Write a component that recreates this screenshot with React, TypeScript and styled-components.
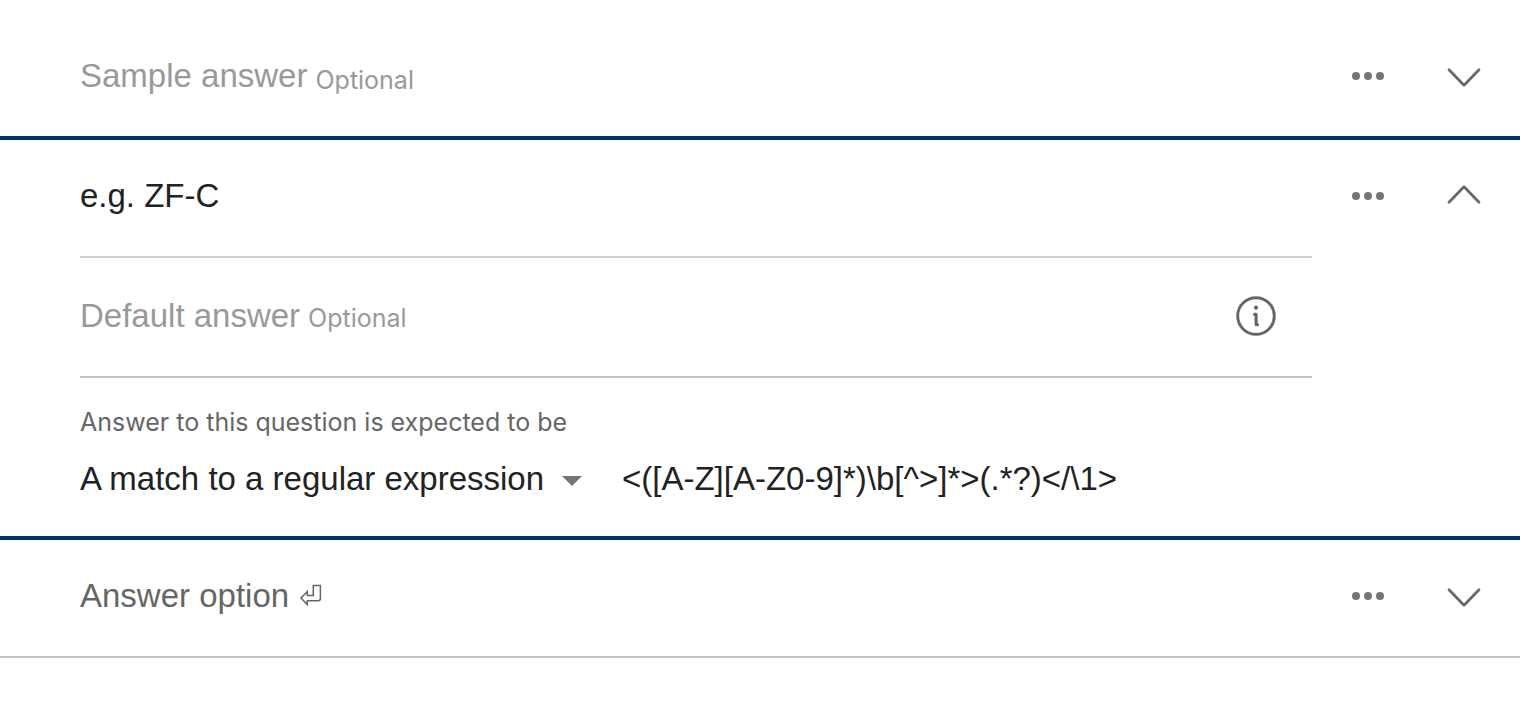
import React, { useState } from "react";
import styled, { createGlobalStyle } from "styled-components";

const color = {
  ink: "#222222",
  label: "#666666",
  hint: "#999999",
  dots: "#757575",
  navy: "#003468",
  line: "#c4c4c0",
  softLine: "#d0d0d0",
};

const GlobalStyle = createGlobalStyle`
  *, *::before, *::after { box-sizing: border-box; }
  body {
    margin: 0;
    background: #ffffff;
    color: ${color.ink};
    font-family: "Liberation Sans", Arial, sans-serif;
    font-size: 33px;
    line-height: 40px;
  }
  button, input, select { font: inherit; color: inherit; }
`;

const Form = styled.form`
  padding-top: 20px;
`;

const Section = styled.section<{ $rule: "strong" | "light" }>`
  display: flex;
  align-items: flex-start;
  gap: 32px;
  padding: 0 32px 0 80px;
  border-bottom: ${(p) =>
    p.$rule === "strong" ? `4px solid ${color.navy}` : `2px solid ${color.line}`};
`;

const Fields = styled.div`
  flex: 1;
  min-width: 0;
`;

const FieldRow = styled.div`
  display: flex;
  align-items: center;
  gap: 10px;
  min-height: 116px;
  padding-bottom: 4px;
`;

const AnswerRow = styled(FieldRow)`
  min-height: 118px;
  border-bottom: 2px solid ${color.softLine};
`;

const DefaultRow = styled(FieldRow)`
  min-height: 120px;
  padding: 0 36px 2px 0;
  border-bottom: 2px solid ${color.line};
`;

const FieldLabel = styled.label<{ $tone: string }>`
  display: flex;
  align-items: baseline;
  gap: 8px;
  color: ${(p) => p.$tone};
  white-space: nowrap;
`;

const Optional = styled.small<{ $low?: boolean }>`
  align-self: ${(p) => (p.$low ? "flex-end" : "auto")};
  font-family: Inter, sans-serif;
  font-size: 25px;
  line-height: 32px;
`;

const TextInput = styled.input`
  flex: 1;
  min-width: 0;
  height: 48px;
  padding: 0;
  border: 0;
  outline: 0;
  background: transparent;
`;

const Actions = styled.div`
  display: flex;
  align-items: center;
  gap: 48px;
  height: 112px;
`;

const IconButton = styled.button`
  display: grid;
  place-items: center;
  width: 48px;
  height: 48px;
  padding: 0;
  border: 0;
  background: transparent;
  cursor: pointer;
`;

const InfoButton = styled(IconButton)`
  width: 40px;
  height: 40px;
`;

const Expected = styled.div`
  padding: 24px 0 20px;
`;

const Caption = styled.label`
  display: block;
  color: ${color.label};
  font-family: Inter, sans-serif;
  font-size: 25px;
`;

const RuleRow = styled.div`
  display: flex;
  align-items: center;
  gap: 40px;
  min-height: 74px;
`;

const SelectBox = styled.div`
  position: relative;
  display: flex;
  align-items: center;
`;

const Select = styled.select`
  height: 48px;
  padding: 0 36px 0 0;
  border: 0;
  outline: 0;
  background: transparent;
  appearance: none;
`;

const Caret = styled.svg`
  position: absolute;
  right: 0;
  pointer-events: none;
`;

const DotsIcon = () => (
  <svg width="32" height="8" viewBox="0 0 32 8" fill={color.dots} aria-hidden="true">
    <circle cx="4" cy="4" r="4" />
    <circle cx="16" cy="4" r="4" />
    <circle cx="28" cy="4" r="4" />
  </svg>
);

const ChevronIcon = ({ up }: { up?: boolean }) => (
  <svg
    width="36"
    height="36"
    viewBox="0 0 36 36"
    fill="none"
    stroke={color.label}
    strokeWidth="2.700"
    strokeLinecap="round"
    strokeLinejoin="round"
    aria-hidden="true"
  >
    <path d={up ? "M3 24.300 18 8.700 33 24.300" : "M3 11.700 18 27.300 33 11.700"} />
  </svg>
);

const InfoIcon = () => (
  <svg width="40" height="40" viewBox="0 0 40 40" fill="none" aria-hidden="true">
    <circle cx="20" cy="20" r="18.300" stroke={color.label} strokeWidth="2.900" />
    <circle cx="20" cy="11.700" r="2.100" fill={color.label} />
    <path
      d="M18.600 18.400H20.100V28.600H21.500"
      stroke={color.label}
      strokeWidth="3.100"
      strokeLinecap="round"
      strokeLinejoin="round"
    />
  </svg>
);

const ReturnIcon = () => (
  <svg width="25" height="23" viewBox="-3 0 25 23" fill="none" stroke={color.label} strokeWidth="1.500" aria-hidden="true">
    <path d="M1 14 7.300 7.500V11.500H13.300V1.600H20.400V14.600Q20.400 16.800 18.200 16.800H7.300V20.600Z" />
  </svg>
);

const RowActions = ({ name, open, onToggle }: { name: string; open?: boolean; onToggle?: () => void }) => (
  <Actions>
    <IconButton type="button" aria-label={`More options for ${name}`}>
      <DotsIcon />
    </IconButton>
    <IconButton
      type="button"
      aria-label={`${open ? "Collapse" : "Expand"} ${name}`}
      aria-expanded={!!open}
      onClick={onToggle}
    >
      <ChevronIcon up={open} />
    </IconButton>
  </Actions>
);

export default function App() {
  const [open, setOpen] = useState(true);
  const [answer, setAnswer] = useState("e.g. ZF-C");
  const [pattern, setPattern] = useState("<([A-Z][A-Z0-9]*)\\b[^>]*>(.*?)</\\1>");

  return (
    <>
      <GlobalStyle />
      <Form onSubmit={(e) => e.preventDefault()}>
        <Section $rule="strong">
          <Fields>
            <FieldRow>
              <FieldLabel htmlFor="sample" $tone={color.hint}>
                Sample answer <Optional $low>Optional</Optional>
              </FieldLabel>
              <TextInput id="sample" />
            </FieldRow>
          </Fields>
          <RowActions name="sample answer" />
        </Section>

        <Section $rule="strong">
          <Fields>
            <AnswerRow>
              <TextInput
                aria-label="Answer"
                value={answer}
                onChange={(e) => setAnswer(e.target.value)}
              />
            </AnswerRow>
            {open && (
              <>
                <DefaultRow>
                  <FieldLabel htmlFor="default" $tone={color.hint}>
                    Default answer <Optional>Optional</Optional>
                  </FieldLabel>
                  <TextInput id="default" />
                  <InfoButton type="button" aria-label="About the default answer">
                    <InfoIcon />
                  </InfoButton>
                </DefaultRow>
                <Expected>
                  <Caption htmlFor="rule">Answer to this question is expected to be</Caption>
                  <RuleRow>
                    <SelectBox>
                      <Select id="rule" defaultValue="regex">
                        <option value="regex">A match to a regular expression</option>
                      </Select>
                      <Caret width="20" height="14" viewBox="0 0 20 14" aria-hidden="true">
                        <path d="M0 4H20L10 14Z" fill={color.dots} />
                      </Caret>
                    </SelectBox>
                    <TextInput
                      aria-label="Regular expression"
                      spellCheck={false}
                      value={pattern}
                      onChange={(e) => setPattern(e.target.value)}
                    />
                  </RuleRow>
                </Expected>
              </>
            )}
          </Fields>
          <RowActions name="answer" open={open} onToggle={() => setOpen(!open)} />
        </Section>

        <Section $rule="light">
          <Fields>
            <FieldRow>
              <FieldLabel htmlFor="option" $tone={color.label}>
                Answer option <ReturnIcon />
              </FieldLabel>
              <TextInput id="option" />
            </FieldRow>
          </Fields>
          <RowActions name="answer option" />
        </Section>
      </Form>
    </>
  );
}
